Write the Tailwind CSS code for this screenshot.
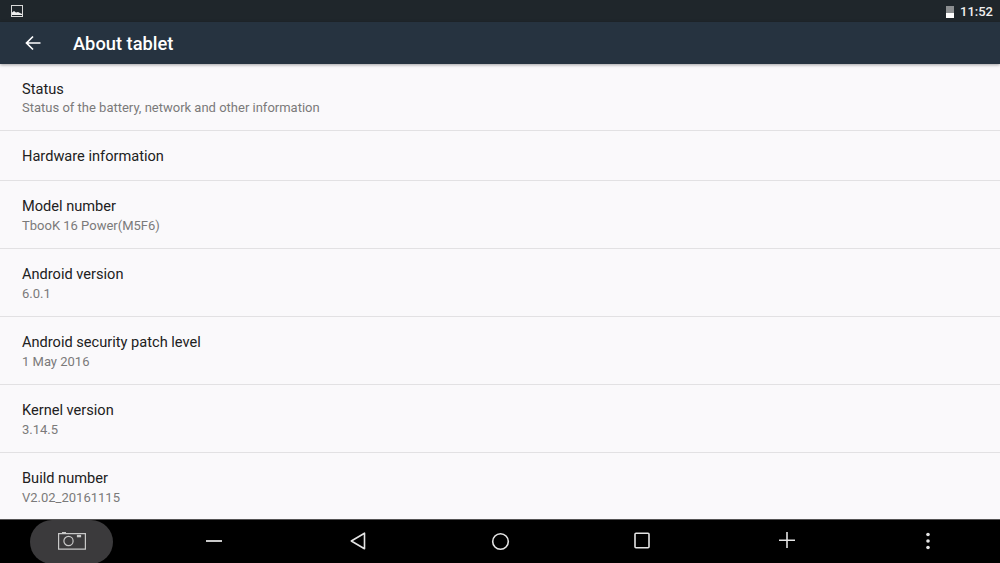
<!DOCTYPE html>
<html lang="en">
<head>
<meta charset="UTF-8">
<title>About tablet</title>
<script src="https://cdn.jsdelivr.net/npm/@tailwindcss/browser@4"></script>
</head>
<body class="w-[1000px] h-[563px] overflow-hidden bg-[#faf9fb] font-['Roboto',sans-serif]">
<div class="flex flex-col h-[563px]">
  <!-- status bar -->
  <div class="h-[22px] bg-[#1f262b] flex items-center justify-between pl-[11px] pr-[7px]">
    <svg width="12" height="12" viewBox="0 0 12 12"><rect x="0.5" y="0.5" width="11" height="11" fill="none" stroke="#d8d8d8"/><path d="M1 10V7.5L3 6l2 1.5 2-.5 4 2v1z" fill="#f0f0f0"/></svg>
    <div class="flex items-center gap-[6px]">
      <div class="w-[8px] h-[12px] flex flex-col mt-[1px]"><div class="h-[7px] bg-[#8b8e90]"></div><div class="h-[5px] bg-white"></div></div>
      <span class="text-[13px] font-medium text-[#f0f0f0] leading-none">11:52</span>
    </div>
  </div>
  <!-- toolbar -->
  <div class="h-[42px] bg-[#263340] flex items-center pl-[25px] shadow-[0_1px_3px_rgba(0,0,0,0.35)] relative">
    <svg width="16" height="16" viewBox="0 0 16 16" fill="none" stroke="#fff" stroke-width="1.7"><path d="M15.5 8H1.5M8 1.5 1.5 8 8 14.5"/></svg>
    <span class="ml-[32px] mt-[2px] text-[18.3px] font-medium text-white">About tablet</span>
  </div>
  <!-- list -->
  <div class="flex-1 flex flex-col">
    <div class="h-[67px] border-b border-[#e2e1e3] pl-[22px] pt-[17px]">
      <div class="text-[14.6px] leading-[16px] text-[#212121]">Status</div>
      <div class="text-[13px] leading-[18px] mt-[2px] text-[#7a7a7a]">Status of the battery, network and other information</div>
    </div>
    <div class="h-[50px] border-b border-[#e2e1e3] pl-[22px] pt-[3px] flex items-center">
      <div class="text-[14.6px] text-[#212121]">Hardware information</div>
    </div>
    <div class="h-[68px] border-b border-[#e2e1e3] pl-[22px] pt-[17px]">
      <div class="text-[14.6px] leading-[16px] text-[#212121]">Model number</div>
      <div class="text-[13px] leading-[18px] mt-[3px] text-[#7a7a7a]">TbooK 16 Power(M5F6)</div>
    </div>
    <div class="h-[68px] border-b border-[#e2e1e3] pl-[22px] pt-[17px]">
      <div class="text-[14.6px] leading-[16px] text-[#212121]">Android version</div>
      <div class="text-[13px] leading-[18px] mt-[3px] text-[#7a7a7a]">6.0.1</div>
    </div>
    <div class="h-[68px] border-b border-[#e2e1e3] pl-[22px] pt-[17px]">
      <div class="text-[14.6px] leading-[16px] text-[#212121]">Android security patch level</div>
      <div class="text-[13px] leading-[18px] mt-[3px] text-[#7a7a7a]">1 May 2016</div>
    </div>
    <div class="h-[68px] border-b border-[#e2e1e3] pl-[22px] pt-[17px]">
      <div class="text-[14.6px] leading-[16px] text-[#212121]">Kernel version</div>
      <div class="text-[13px] leading-[18px] mt-[3px] text-[#7a7a7a]">3.14.5</div>
    </div>
    <div class="flex-1 pl-[22px] pt-[17px]">
      <div class="text-[14.6px] leading-[16px] text-[#212121]">Build number</div>
      <div class="text-[13px] leading-[18px] mt-[3px] text-[#7a7a7a]">V2.02_20161115</div>
    </div>
  </div>
  <!-- nav bar -->
  <div class="h-[44px] bg-black border-t border-[#555] relative">
    <div class="absolute left-[30px] top-0 w-[83px] h-[44px] rounded-[22px] bg-[#3b3a3c] flex items-center justify-center">
      <svg class="mb-[4px]" width="28" height="20" viewBox="0 0 28 20" fill="none" stroke="#c8c8c8" stroke-width="1.2"><path d="M0.6 3.6h26.8v15.5H0.6z"/><path d="M4 2.6h4" /><circle cx="10.5" cy="11" r="4.6"/><rect x="19.5" y="5.5" width="3" height="1.2" fill="#c8c8c8"/></svg>
    </div>
    <svg class="absolute left-[206px] top-[20px]" width="16" height="2" viewBox="0 0 16 2"><rect width="16" height="2" fill="#c9c9c9"/></svg>
    <svg class="absolute left-[350px] top-[12px]" width="16" height="18" viewBox="0 0 16 18" fill="none" stroke="#e4e4e4" stroke-width="1.6" stroke-linejoin="round"><path d="M14.5 1.2v15.6L1.3 9z"/></svg>
    <svg class="absolute left-[491px] top-[12px]" width="19" height="19" viewBox="0 0 19 19" fill="none" stroke="#e4e4e4" stroke-width="1.6"><circle cx="9.5" cy="9.5" r="7.8"/></svg>
    <svg class="absolute left-[634px] top-[12px]" width="16" height="17" viewBox="0 0 16 17" fill="none" stroke="#e4e4e4" stroke-width="1.6"><rect x="1" y="1.2" width="14" height="14.6" rx="1"/></svg>
    <svg class="absolute left-[779px] top-[12px]" width="16" height="17" viewBox="0 0 16 17" fill="none" stroke="#e4e4e4" stroke-width="1.6"><path d="M0 8.3h16M8 0v16"/></svg>
    <svg class="absolute left-[925px] top-[12px]" width="6" height="18" viewBox="0 0 6 18" fill="#e4e4e4"><circle cx="3" cy="2.5" r="1.8"/><circle cx="3" cy="9" r="1.8"/><circle cx="3" cy="15.5" r="1.8"/></svg>
  </div>
</div>
</body>
</html>
